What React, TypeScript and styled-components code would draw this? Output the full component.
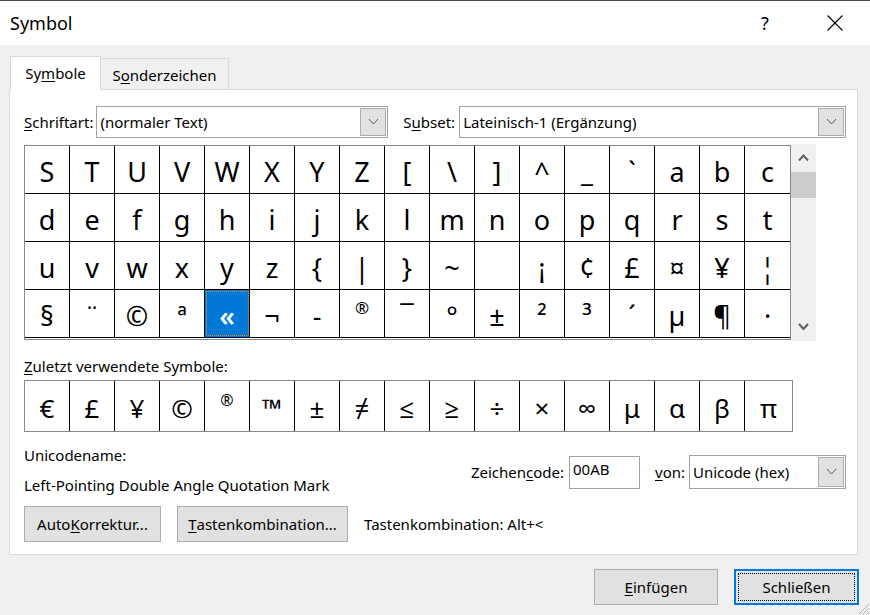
import styled, { createGlobalStyle, css } from 'styled-components';

const GlobalStyle = createGlobalStyle`
  html, body {
    margin: 0;
    padding: 0;
    background: #f0f0f0;
  }
  body {
    font-family: "Noto Sans", "Open Sans", sans-serif;
    font-size: 15px;
    color: #000;
  }
  * {
    box-sizing: border-box;
  }
`;

const rows: string[][] = [
  ['S', 'T', 'U', 'V', 'W', 'X', 'Y', 'Z', '[', '\\', ']', '^', '_', '`', 'a', 'b', 'c'],
  ['d', 'e', 'f', 'g', 'h', 'i', 'j', 'k', 'l', 'm', 'n', 'o', 'p', 'q', 'r', 's', 't'],
  ['u', 'v', 'w', 'x', 'y', 'z', '{', '|', '}', '~', '\u00a0', '¡', '¢', '£', '¤', '¥', '¦'],
  ['§', '¨', '©', 'ª', '«', '¬', '-', '®', '¯', '°', '±', '²', '³', '´', 'µ', '¶', '·'],
];

const recent = ['€', '£', '¥', '©', '®', '™', '±', '≠', '≤', '≥', '÷', '×', '∞', 'μ', 'α', 'β', 'π'];

// Calibri draws the registered sign small and raised
const smallGlyphs = ['®'];

const Window = styled.div`
  position: relative;
  width: 870px;
  height: 615px;
  background: #f0f0f0;
  border-top: 1px solid #4b4b4b;
  display: flex;
  flex-direction: column;
  overflow: hidden;
`;

const TitleBar = styled.div`
  height: 44px;
  background: #fff;
  display: flex;
  align-items: center;
`;

const Title = styled.div`
  padding-left: 10px;
  font-size: 18px;
  margin-top: -1px;
`;

const TitleButtons = styled.div`
  margin-left: auto;
  display: flex;
  height: 100%;
`;

const TitleButton = styled.div`
  width: 70px;
  height: 100%;
  display: flex;
  align-items: center;
  justify-content: center;
  font-size: 18px;
`;

const Content = styled.div`
  padding: 11px 13px 0 9px;
  display: flex;
  flex-direction: column;
`;

const TabStrip = styled.div`
  height: 33px;
  display: flex;
  align-items: flex-end;
  padding-left: 1px;
`;

const Tab = styled.div<{ $active?: boolean }>`
  display: flex;
  align-items: center;
  justify-content: center;
  border: 1px solid #d9d9d9;
  border-bottom: none;
  font-size: 15px;
  ${(p) => (p.$active ? css`
    width: 91px;
    height: 34px;
    margin-bottom: -1px;
    background: #fff;
    position: relative;
    z-index: 1;
    padding-bottom: 2px;
  ` : css`
    width: 128px;
    height: 31px;
    border-left: none;
    background: #f0f0f0;
    padding-top: 1px;
  `)}
`;

const Panel = styled.div`
  width: 849px;
  height: 466px;
  background: #fff;
  border: 1px solid #d9d9d9;
  padding: 0 11px 0 14px;
  display: flex;
  flex-direction: column;
`;

const FontRow = styled.div`
  margin-top: 16px;
  display: flex;
  align-items: center;
  height: 32px;
`;

const Label = styled.span<{ $gap?: number }>`
  margin-left: ${(p) => p.$gap ?? 0}px;
  white-space: nowrap;
`;

const U = styled.span`
  text-decoration: underline;
  text-underline-offset: 2px;
`;

const Select = styled.div<{ $width: number; $height?: number; $gap?: number }>`
  width: ${(p) => p.$width}px;
  height: ${(p) => p.$height ?? 32}px;
  margin-left: ${(p) => p.$gap ?? 0}px;
  border: 1px solid #a3a3a3;
  background: #fff;
  display: flex;
  align-items: center;
  padding: 1px;
`;

const SelectText = styled.div`
  flex: 1;
  padding-left: 2px;
  white-space: nowrap;
`;

const SelectButton = styled.div`
  width: 26px;
  height: 100%;
  background: #e1e1e1;
  border: 1px solid #adadad;
  display: flex;
  align-items: center;
  justify-content: center;
`;

const SymbolArea = styled.div`
  margin-top: 7px;
  display: flex;
  align-items: flex-start;
`;

const Grid = styled.div`
  width: 767px;
  height: 195px;
  border: 1px solid #828790;
  overflow: hidden;
  display: flex;
  flex-direction: column;
`;

const GridRow = styled.div`
  display: flex;
  height: 48px;
  flex: none;
  border-bottom: 1px solid #000;
`;

const Cell = styled.div<{ $selected?: boolean; $last?: boolean; $small?: boolean }>`
  width: ${(p) => (p.$last ? 'auto' : '45px')};
  flex: ${(p) => (p.$last ? '1' : 'none')};
  height: 100%;
  border-right: ${(p) => (p.$last ? 'none' : '1px solid #000')};
  display: flex;
  align-items: center;
  justify-content: center;
  font-family: "Noto Sans", "Open Sans", sans-serif;
  font-size: 27px;
  line-height: 1;
  padding-top: 3px;
  ${(p) => p.$small && css`
    font-size: 17px;
    padding-top: 0;
    padding-bottom: 12px;
  `}
  ${(p) => p.$selected && css`
    background: #0078d7;
    color: #fff;
    font-weight: 600;
    outline: 1px dotted #f08a24;
    outline-offset: -2px;
  `}
`;

const ScrollBar = styled.div`
  width: 25px;
  height: 197px;
  margin-top: -1px;
  background: #f0f0f0;
  display: flex;
  flex-direction: column;
  align-items: center;
`;

const ScrollArrow = styled.div`
  height: 28px;
  width: 100%;
  display: flex;
  align-items: center;
  justify-content: center;
`;

const ScrollThumb = styled.div`
  width: 100%;
  height: 26px;
  background: #cdcdcd;
`;

const ScrollTrack = styled.div`
  flex: 1;
`;

const SectionLabel = styled.div`
  margin-top: 15px;
  height: 20px;
  line-height: 20px;
`;

const RecentBox = styled.div`
  margin-top: 4px;
  width: 769px;
  height: 52px;
  border: 1px solid #828790;
  display: flex;
`;

const RecentCell = styled(Cell)`
  font-size: ${(p) => (p.$small ? '16px' : '26px')};
  padding-top: ${(p) => (p.$small ? '0' : '4px')};
`;

const InfoRow = styled.div`
  display: flex;
  justify-content: space-between;
  margin-top: 13px;
`;

const InfoText = styled.div`
  display: flex;
  flex-direction: column;
  gap: 10px;
  line-height: 20px;
`;

const CodeGroup = styled.div`
  display: flex;
  align-items: center;
  margin-top: 10px;
  height: 34px;
`;

const CodeInput = styled.div`
  width: 71px;
  height: 33px;
  margin-left: 5px;
  border: 1px solid #a3a3a3;
  padding: 2px 3px;
  line-height: 20px;
`;

const ButtonRow = styled.div`
  display: flex;
  align-items: center;
  margin-top: 11px;
  gap: 16px;
`;

const Button = styled.div<{ $width: number; $default?: boolean }>`
  position: relative;
  width: ${(p) => p.$width}px;
  height: 36px;
  background: #e1e1e1;
  border: 1px solid #adadad;
  display: flex;
  align-items: center;
  justify-content: center;
  white-space: nowrap;
  ${(p) => p.$default && css`
    border: 2px solid #0078d7;
    &::after {
      content: '';
      position: absolute;
      inset: 2px;
      border: 1px dotted #000;
    }
  `}
`;

const Footer = styled.div`
  display: flex;
  justify-content: flex-end;
  gap: 16px;
  margin-top: 14px;
  margin-right: -2px;
`;

const Grip = styled.svg`
  position: absolute;
  right: 0;
  bottom: 0;
`;

const Chevron = ({ up, size = 9, stroke = 2, color = '#606060' }: { up?: boolean; size?: number; stroke?: number; color?: string }) => (
  <svg width={size + 2} height={size / 2 + 3} viewBox={`0 0 ${size + 2} ${size / 2 + 3}`}>
    <polyline
      points={up
        ? `1,${size / 2 + 2} ${size / 2 + 1},1.5 ${size + 1},${size / 2 + 2}`
        : `1,1 ${size / 2 + 1},${size / 2 + 1.5} ${size + 1},1`}
      fill="none"
      stroke={color}
      strokeWidth={stroke}
    />
  </svg>
);

const DropChevron = () => <Chevron size={9} stroke={1} color="#5a5a5a" />;

export default function App() {
  return (
    <Window>
      <GlobalStyle />
      <TitleBar>
        <Title>Symbol</Title>
        <TitleButtons>
          <TitleButton>?</TitleButton>
          <TitleButton>
            <svg width="16" height="16" viewBox="0 0 16 16">
              <path d="M0.5 0.5 L15.5 15.5 M15.5 0.5 L0.5 15.5" stroke="#000" strokeWidth="1.1" fill="none" />
            </svg>
          </TitleButton>
        </TitleButtons>
      </TitleBar>
      <Content>
        <TabStrip>
          <Tab $active>Sy<U>m</U>bole</Tab>
          <Tab>S<U>o</U>nderzeichen</Tab>
        </TabStrip>
        <Panel>
          <FontRow>
            <Label><U>S</U>chriftart:</Label>
            <Select $width={292} $gap={3}>
              <SelectText>(normaler Text)</SelectText>
              <SelectButton><DropChevron /></SelectButton>
            </Select>
            <Label $gap={15}>S<U>u</U>bset:</Label>
            <Select $width={387} $gap={4}>
              <SelectText>Lateinisch-1 (Ergänzung)</SelectText>
              <SelectButton><DropChevron /></SelectButton>
            </Select>
          </FontRow>

          <SymbolArea>
            <Grid>
              {rows.map((row, r) => (
                <GridRow key={r}>
                  {row.map((ch, c) => (
                    <Cell
                      key={c}
                      $last={c === row.length - 1}
                      $selected={r === 3 && c === 4}
                      $small={smallGlyphs.includes(ch)}
                    >
                      {ch}
                    </Cell>
                  ))}
                </GridRow>
              ))}
            </Grid>
            <ScrollBar>
              <ScrollArrow><Chevron up /></ScrollArrow>
              <ScrollThumb />
              <ScrollTrack />
              <ScrollArrow><Chevron /></ScrollArrow>
            </ScrollBar>
          </SymbolArea>

          <SectionLabel><U>Z</U>uletzt verwendete Symbole:</SectionLabel>
          <RecentBox>
            {recent.map((ch, i) => (
              <RecentCell key={i} $last={i === recent.length - 1} $small={smallGlyphs.includes(ch)}>
                {ch}
              </RecentCell>
            ))}
          </RecentBox>

          <InfoRow>
            <InfoText>
              <div>Unicodename:</div>
              <div>Left-Pointing Double Angle Quotation Mark</div>
            </InfoText>
            <CodeGroup>
              <Label>Zeichen<U>c</U>ode:</Label>
              <CodeInput>00AB</CodeInput>
              <Label $gap={15}><U>v</U>on:</Label>
              <Select $width={157} $height={34} $gap={4}>
                <SelectText>Unicode (hex)</SelectText>
                <SelectButton><DropChevron /></SelectButton>
              </Select>
            </CodeGroup>
          </InfoRow>

          <ButtonRow>
            <Button $width={137}>Auto<U>K</U>orrektur...</Button>
            <Button $width={171}><U>T</U>astenkombination...</Button>
            <Label>Tastenkombination: Alt+&lt;</Label>
          </ButtonRow>
        </Panel>

        <Footer>
          <Button $width={124}><U>E</U>infügen</Button>
          <Button $width={125} $default>Schließen</Button>
        </Footer>
      </Content>
      <Grip width="14" height="14" viewBox="0 0 14 14">
        <path d="M13 3 L3 13 M13 7 L7 13 M13 11 L11 13" stroke="#b0b0b0" strokeWidth="1" />
      </Grip>
    </Window>
  );
}
